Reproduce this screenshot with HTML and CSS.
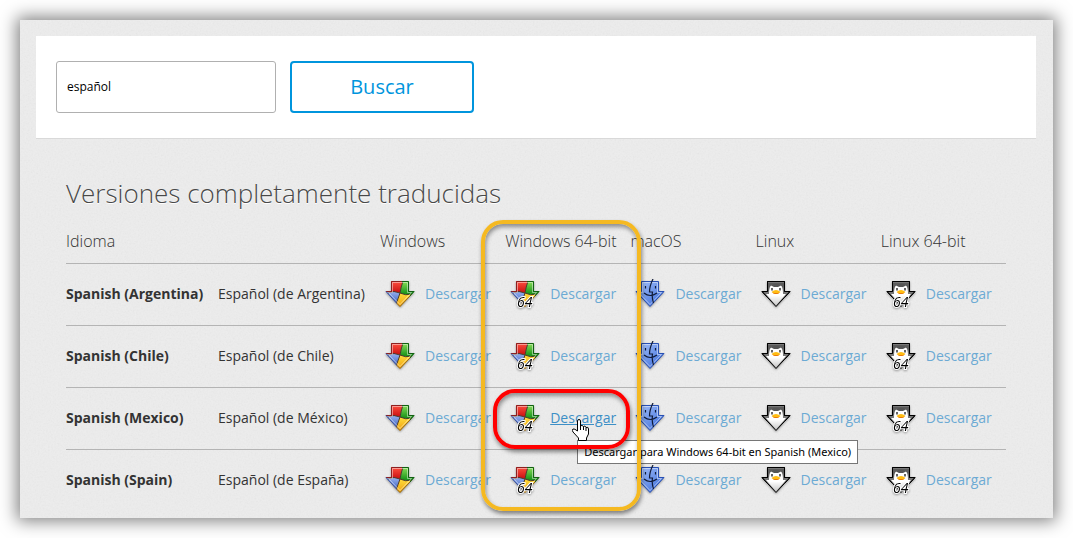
FILE: index.html
```html
<!DOCTYPE html>
<html lang="es">
<head>
<meta charset="utf-8">
<title>Versiones completamente traducidas</title>
<meta name="viewport" content="width=device-width, initial-scale=1">
<link rel="stylesheet" href="styles.css">
</head>
<body>
<svg class="sprite" width="0" height="0" aria-hidden="true">
  <defs>
    <linearGradient id="red" x2="0" y2="1"><stop offset="0" stop-color="#ff5140"/><stop offset="1" stop-color="#c80f10"/></linearGradient>
    <linearGradient id="green" x2="0" y2="1"><stop offset="0" stop-color="#8be05a"/><stop offset="1" stop-color="#0b8a12"/></linearGradient>
    <linearGradient id="blue" x2="0" y2="1"><stop offset="0" stop-color="#9ab4f0"/><stop offset="1" stop-color="#3a5fc0"/></linearGradient>
    <linearGradient id="yellow" x2="0" y2="1"><stop offset="0" stop-color="#ffdc3a"/><stop offset="1" stop-color="#f0a010"/></linearGradient>
    <linearGradient id="face" x2="1" y2="1"><stop offset="0" stop-color="#a9c4fb"/><stop offset="1" stop-color="#3467d8"/></linearGradient>
    <linearGradient id="belly" x2="0" y2="1"><stop offset="0.5" stop-color="#fff"/><stop offset="1" stop-color="#c8c8c8"/></linearGradient>
    <clipPath id="arrow"><path d="M6 2H24V12H30L15 28L0 12H6Z"/></clipPath>
    <symbol id="windows" viewBox="0 0 30 30">
      <g clip-path="url(#arrow)">
        <path fill="url(#red)" d="M6 2H18Q16 8 15 14Q10 12 6 14Z"/>
        <path fill="url(#green)" d="M18 2H24V12H30L26 16Q21 17 15 14Q16 8 18 2Z"/>
        <path fill="url(#blue)" d="M0 12L6 13Q10 12 15 14Q13 20 11 25Z"/>
        <path fill="url(#yellow)" d="M15 14Q21 17 27 15L15 28L11 24Q13 20 15 14Z"/>
        <path d="M18 2Q16 8 15 14Q13 20 11 25M3 14Q9 11 15 14Q21 17 26 15" fill="none" stroke="#4c3a2c" stroke-width="1"/>
      </g>
      <path d="M7.500 3.500H22.500V13.500H26.500L15 25.500L3.500 13.500H7.500Z" fill="none" stroke="#fff" stroke-opacity=".45"/>
      <path d="M1 12.500H6.500V2.500H17" fill="none" stroke="#8c2020"/>
      <path d="M17 2.500H23.500V12.500H29L25 17" fill="none" stroke="#126012"/>
      <path d="M1 12.500L12 24.500" fill="none" stroke="#3f549c"/>
      <path d="M12 24.500L15 27.500L25 17" fill="none" stroke="#94660f"/>
    </symbol>
    <symbol id="macos" viewBox="0 0 30 30">
      <path d="M6.500 2.500H23.500V12.500H29L15 27.500L1 12.500H6.500Z" fill="url(#face)" stroke="#2850b4"/>
      <path d="M7.500 3.500H22.500V13.500H26.500L15 25.500L3.500 13.500H7.500Z" fill="none" stroke="#fff" stroke-opacity=".45"/>
      <path d="M18 0C15.500 5 14.500 9 14.500 13H17.500C16.800 17 17.500 21 18.500 24M9 14Q15 19 22 14M10.500 7V9.500M20.500 7V9.500" fill="none" stroke="#101b38" stroke-width="1.200"/>
    </symbol>
    <symbol id="linux" viewBox="0 0 30 30">
      <path d="M6.500 2.500H23.500V12.500H29L15 27.500L1 12.500H6.500Z" fill="#777" stroke="#000"/>
      <path d="M7 4H23V7L22 12L7 12Z" fill="#5c5c5c"/>
      <path d="M8 15C8 9 9 6.500 11 6.500C13 6.500 14 8 15 8C16 8 17 6.500 19 6.500C21 6.500 22 9 22 15L25 15L15 26.500L5 15Z" fill="url(#belly)"/>
      <path d="M10 6.500Q15 3 20 6.500L17 8H13Z" fill="#555"/>
      <path d="M11 9V11.500M19 9V11.500" fill="none" stroke="#333" stroke-width="1.500"/>
      <path d="M10.500 13Q15 9 19.500 13Q15 17 10.500 13Z" fill="#ffbd12"/>
      <path d="M11 13.500Q15 14.500 19 13.500Q15 16.500 11 13.500Z" fill="#e87408"/>
      <path d="M6.500 12.500V2.500H23.500V12.500H29L24 18M1 12.500L6 18M1 12.500H6.500" fill="none" stroke="#000"/>
    </symbol>
  </defs>
</svg>

<main class="panel">
  <svg class="grain" aria-hidden="true"><filter id="noise" x="0" y="0" width="100%" height="100%"><feTurbulence type="fractalNoise" baseFrequency=".6" numOctaves="2" seed="4"/><feColorMatrix type="saturate" values="0"/></filter><rect width="100%" height="100%" filter="url(#noise)"/></svg>
  <form class="search">
    <input class="search-field" type="text" value="español" aria-label="Idioma">
    <button class="search-button" type="button">Buscar</button>
  </form>
  <section class="versions">
    <h2 class="title">Versiones completamente traducidas</h2>
    <div class="table-wrap">
      <table class="languages">
        <thead>
          <tr><th class="col-name">Idioma</th><th class="col-local"></th><th>Windows</th><th>Windows 64-bit</th><th>macOS</th><th>Linux</th><th>Linux 64-bit</th></tr>
        </thead>
        <tbody id="rows"></tbody>
      </table>
      <div class="mark mark-column"></div>
      <div class="mark mark-link"></div>
    </div>
  </section>
</main>
<script src="script.js"></script>
</body>
</html>
```

FILE: styles.css
```css
* { box-sizing: border-box; }

body {
  margin: 0;
  padding: 20px;
  background: #fff;
  color: #333;
  font: 14px/20px "Open Sans", "Noto Sans", sans-serif;
}

.sprite { position: absolute; }

.panel {
  position: relative;
  padding: 16px 17px 7px 16px;
  background: #ededed;
  box-shadow: 0 0 16px 3px rgba(0, 0, 0, .5);
}

.grain {
  position: absolute;
  inset: 0;
  width: 100%;
  height: 100%;
  opacity: .1;
}

.search {
  position: relative;
  display: flex;
  gap: 14px;
  padding: 25px 20px;
  background: #fff;
  border-bottom: 1px solid #d9d9d9;
}

.search-field {
  width: 220px;
  height: 52px;
  padding: 0 10px 2px;
  border: 1px solid #b0b0b0;
  border-radius: 3px;
  background: #fff;
  color: #000;
  font: 12px/20px "Open Sans", "Noto Sans", sans-serif;
}

.search-button {
  width: 184px;
  height: 52px;
  padding: 0;
  border: 2px solid #0095dd;
  border-radius: 4px;
  background: #fff;
  color: #0095dd;
  font: 20px/28px "Open Sans", "Noto Sans", sans-serif;
}

.versions {
  position: relative;
  padding: 36px 30px 0;
}

.title {
  margin: 0;
  color: #484848;
  font-size: 26px;
  font-weight: 300;
  line-height: 36px;
  text-shadow: 0 1px 0 #fff;
}

.table-wrap { position: relative; }

.languages {
  width: 100%;
  table-layout: fixed;
  border-collapse: separate;
  border-spacing: 0;
}

.languages th {
  padding: 18px 0 10px;
  border-bottom: 1px solid #b4b4b4;
  font-size: 16px;
  font-weight: 300;
  line-height: 24px;
  text-align: left;
  white-space: nowrap;
}

.languages .col-name { width: 152px; }
.languages .col-local { width: 162px; }

.languages td {
  height: 62px;
  padding: 0 0 2px;
  border-bottom: 1px solid #b4b4b4;
  white-space: nowrap;
}

.languages tr:last-child td {
  height: 61px;
  border-bottom: 0;
}

.language { font-weight: 700; }

.download {
  position: relative;
  display: flex;
  align-items: center;
  gap: 10px;
  padding-left: 5px;
  color: #6caad4;
  text-decoration: none;
}

.download.active { color: #3d8fc6; }
.download.active .label { text-decoration: underline; }

.icon {
  flex: none;
  width: 30px;
  height: 30px;
  overflow: visible;
  filter: drop-shadow(0 1px 1px rgba(0, 0, 0, .35));
}

.bits {
  fill: #000;
  stroke: #fff;
  stroke-width: 2px;
  paint-order: stroke;
  font-size: 14px;
  font-style: italic;
}

.tooltip {
  position: absolute;
  top: 37px;
  left: 72px;
  z-index: 1;
  padding: 1px 6px;
  border: 1px solid #767676;
  background: #fff;
  color: #000;
  font: 11px/20px "Noto Sans", "Open Sans", sans-serif;
}

.pointer {
  position: absolute;
  top: 16px;
  left: 67px;
  z-index: 3;
  width: 17px;
  height: 22px;
}

.mark {
  position: absolute;
  z-index: 2;
  border: 4px solid #f5b921;
  border-radius: 22px;
  box-shadow: 1px 3px 4px rgba(0, 0, 0, .45), inset 1px 3px 4px rgba(0, 0, 0, .4);
  pointer-events: none;
}

.mark-column {
  top: 9px;
  right: 365px;
  bottom: 0;
  width: 160px;
}

.mark-link {
  top: 178px;
  right: 376px;
  width: 137px;
  height: 60px;
  border-color: #f00;
}
```

FILE: script.js
```javascript
const languages = [
  ["Argentina", "Argentina"],
  ["Chile", "Chile"],
  ["Mexico", "México"],
  ["Spain", "España"]
];
const platforms = [
  ["Windows", "windows", false],
  ["Windows 64-bit", "windows", true],
  ["macOS", "macos", false],
  ["Linux", "linux", false],
  ["Linux 64-bit", "linux", true]
];
const pointer = `<svg class="pointer" viewBox="0 0 17 22"><path d="M5.500 12V2Q5.500 .5 7 .5T8.500 2V7Q10 5.500 11.500 7.500Q13 6 14 8.500Q16.500 7.500 16.500 10V15L14.500 19V21.500H6.500V19L1 13Q-.5 11 1 10Q2.500 9.500 5.500 12Z" fill="#fff" stroke="#000"/><path d="M8.500 7V11M11.500 7.500V11M14 8.500V12" stroke="#000" fill="none"/></svg>`;

function download(country, [name, icon, is64]) {
  const active = country === "Mexico" && name === "Windows 64-bit";
  return `<td><a class="download${active ? " active" : ""}" href="#">
    <svg class="icon" viewBox="0 0 30 30" aria-hidden="true"><use href="#${icon}"/>${is64 ? '<text class="bits" x="7" y="28">64</text>' : ""}</svg>
    <span class="label">Descargar</span>
    ${active ? `<span class="tooltip" role="tooltip">Descargar para Windows 64-bit en Spanish (Mexico)</span>${pointer}` : ""}
  </a></td>`;
}

document.getElementById("rows").innerHTML = languages.map(([country, local]) =>
  `<tr><td class="language">Spanish (${country})</td><td>Español (de ${local})</td>${platforms.map(p => download(country, p)).join("")}</tr>`
).join("");
```
